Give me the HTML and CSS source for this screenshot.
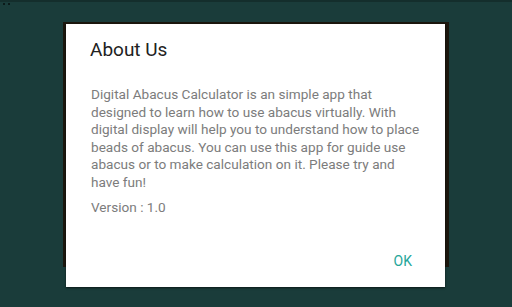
FILE: index.html
```html
<!DOCTYPE html>
<html>
<head>
  <link rel="stylesheet" href="styles.css">
</head>
<body>
  <div class="status-bar">
    <span class="dot"></span>
    <span class="dot"></span>
  </div>
  <div class="screen">
    <div class="backdrop"></div>
    <div class="dialog">
      <h1 class="dialog-title">About Us</h1>
      <p class="dialog-text">Digital Abacus Calculator is an simple app that designed to learn how to use abacus virtually. With digital display will help you to understand how to place beads of abacus. You can use this app for guide use abacus or to make calculation on it. Please try and have&nbsp;fun!</p>
      <p class="dialog-text">Version : 1.0</p>
      <div class="dialog-actions">
        <button class="btn-ok">OK</button>
      </div>
    </div>
  </div>
</body>
</html>
```

FILE: styles.css
```css
body {
  margin: 0;
  width: 512px;
  height: 307px;
  overflow: hidden;
  background-color: #1a3c3a;
  font-family: Roboto, "Liberation Sans", sans-serif;
}

.status-bar {
  height: 2px;
  background-color: #142e2c;
  position: relative;
}

.dot {
  position: absolute;
  top: 3px;
  width: 2px;
  height: 2px;
  background-color: #0b1a19;
}
.dot:first-child { left: 3px; }
.dot:last-child { left: 8px; }

.screen {
  position: relative;
  height: 305px;
}

/* la fenetre sombre derriere le dialogue */
.backdrop {
  position: absolute;
  left: 63px;
  top: 20px;
  width: 386px;
  height: 245px;
  background-color: #1c170e;
}

.dialog {
  position: absolute;
  left: 66px;
  top: 22px;
  width: 379px;
  height: 263px;
  box-sizing: border-box;
  padding: 14px 14px 0 24px;
  background-color: #ffffff;
  box-shadow: 0 1px 2px rgba(0, 0, 0, 0.6);
  display: flex;
  flex-direction: column;
}

.dialog-title {
  margin: 0;
  font-size: 19px;
  line-height: 23px;
  font-weight: 400;
  color: #212121;
}

.dialog-text {
  width: 339px;
  margin: 25px 0 0 1px;
  font-size: 13.6px;
  line-height: 17.6px;
  color: #7c7c7c;
}

.dialog-text + .dialog-text {
  margin-top: 7px;
}

.dialog-actions {
  margin-top: auto;
  display: flex;
  justify-content: flex-end;
  padding: 0 19px 18px 0;
}

.btn-ok {
  border: none;
  background: none;
  padding: 0;
  font-family: Roboto, "Liberation Sans", sans-serif;
  font-size: 14px;
  color: #26a69a;
  cursor: pointer;
}
```
